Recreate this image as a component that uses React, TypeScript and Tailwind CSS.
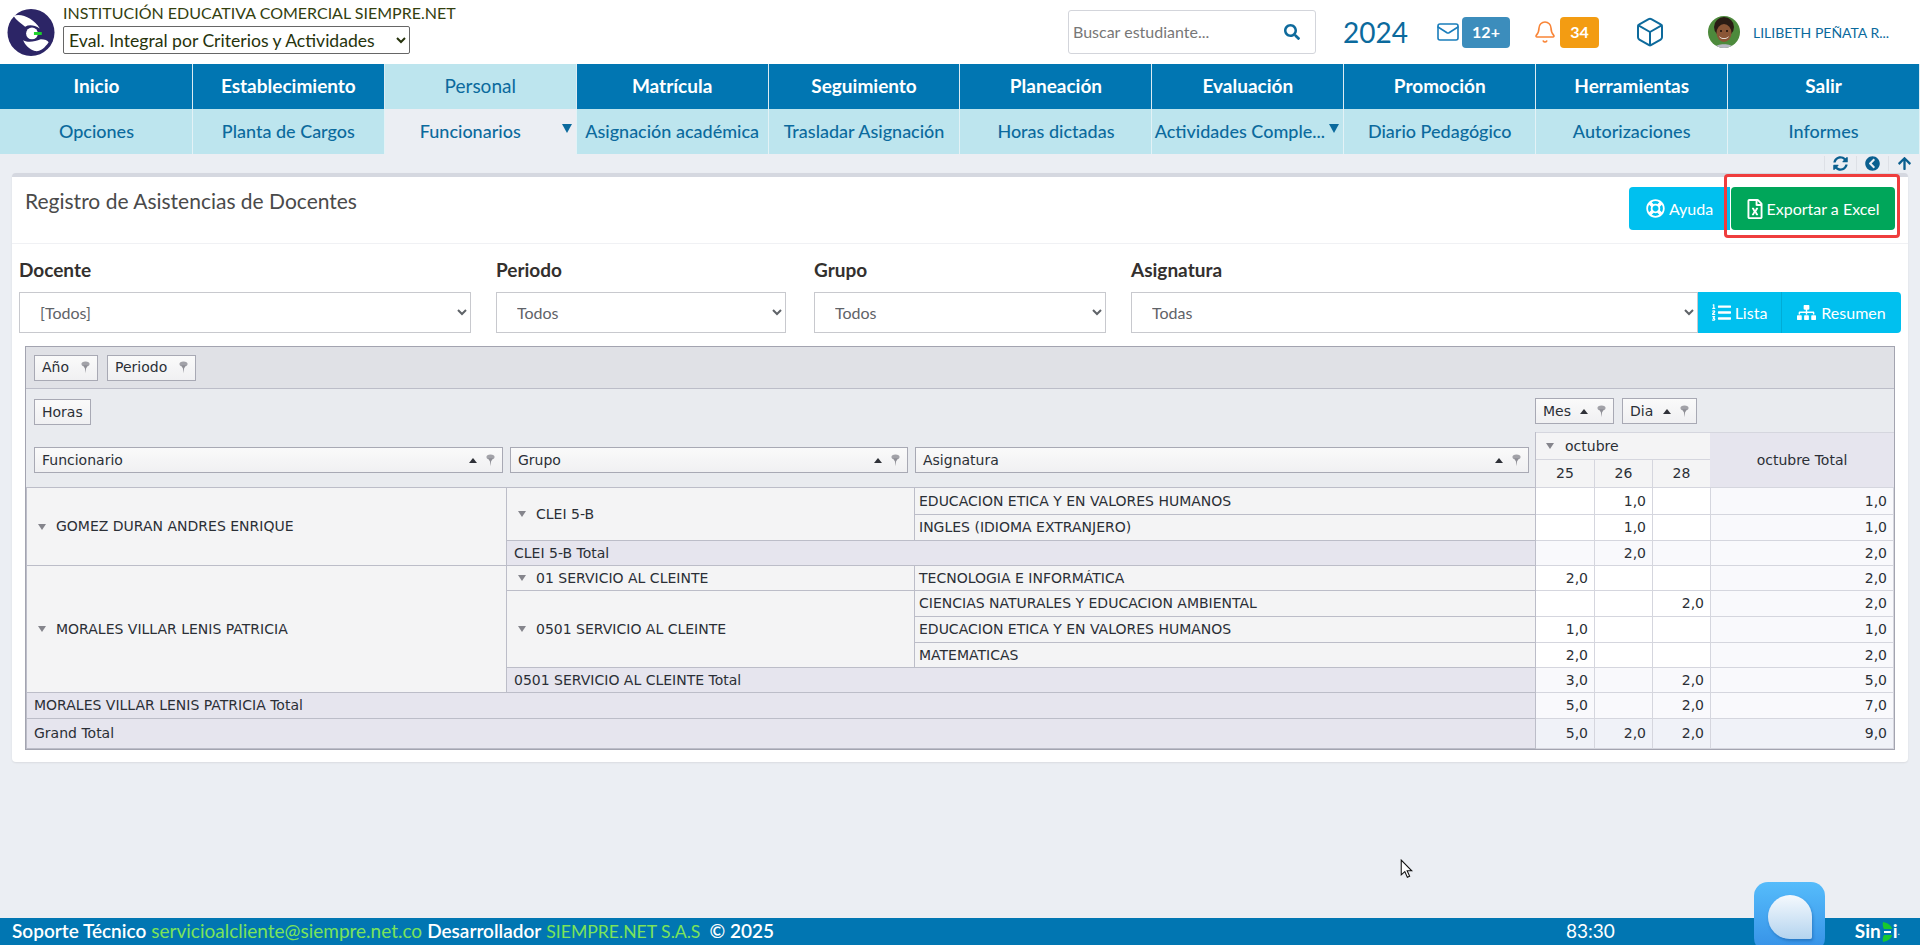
import { Bell, Box, Mail } from 'lucide-react';
import { FaArrowUp, FaChevronCircleLeft, FaListOl, FaRegFileExcel, FaRegLifeRing, FaSearch, FaSitemap, FaSyncAlt } from 'react-icons/fa';

const ui = "font-['Lato','Noto_Sans',sans-serif]";
const tbl = "font-['DejaVu_Sans','Liberation_Sans',sans-serif]";

const mainNav = ['Inicio', 'Establecimiento', 'Personal', 'Matrícula', 'Seguimiento', 'Planeación', 'Evaluación', 'Promoción', 'Herramientas', 'Salir'];
const subNav = ['Opciones', 'Planta de Cargos', 'Funcionarios', 'Asignación académica', 'Trasladar Asignación', 'Horas dictadas', 'Actividades Comple...', 'Diario Pedagógico', 'Autorizaciones', 'Informes'];

type Row = { h: string; vals: string[]; kind: 'plain' | 'total' | 'grand' };

function Logo() {
  return (
    <svg viewBox="0 0 48 48" className="h-[47px] w-[48px] shrink-0">
      <circle cx="24" cy="24" r="24" fill="#2c2566" />
      <path d="M6 7c9-3 21 3 27 13-6-4-11-4-15-2C14 15 9 12 6 7z" fill="#fff" />
      <path d="M16 32c6 3 12 1 18-1 4 0 7 1 8 3-4 6-9 10-14 9-6-2-10-6-12-11z" fill="#fff" />
      <circle cx="25" cy="25" r="6" fill="#fff" />
      <rect x="27" y="23.5" width="8" height="3" fill="#1ed12c" />
    </svg>
  );
}

function Avatar() {
  return (
    <svg viewBox="0 0 32 32" className="h-[32px] w-[32px] shrink-0 rounded-full">
      <rect width="32" height="32" fill="#4d8a3c" />
      <ellipse cx="16" cy="11" rx="10" ry="10" fill="#2a1c14" />
      <ellipse cx="16" cy="17" rx="7.5" ry="9" fill="#8a5636" />
      <path d="M11 20c3 3 7 3 10 0-1 4-9 4-10 0z" fill="#fff" />
      <circle cx="13" cy="15" r="1" fill="#1a100a" />
      <circle cx="19" cy="15" r="1" fill="#1a100a" />
      <path d="M6 32c2-5 18-5 20 0z" fill="#b8b8c4" />
    </svg>
  );
}

function Pin() {
  return (
    <svg viewBox="0 0 10 14" className="h-[13px] w-[9px] shrink-0">
      <ellipse cx="5" cy="3" rx="4.5" ry="2.8" fill="#a2a2a8" />
      <path d="M2.2 4.5h5.6L5.6 8 5 13.5 4.4 8z" fill="#8f8f96" />
    </svg>
  );
}

function Asc() {
  return <span className="block h-0 w-0 shrink-0 border-x-[4px] border-b-[5px] border-x-transparent border-b-[#2f3138]" />;
}

function Collapse() {
  return <span className="inline-block h-0 w-0 shrink-0 border-x-[4.5px] border-t-[6px] border-x-transparent border-t-[#85858c]" />;
}

function Chip({ label, sort, pin = true, className }: { label: string; sort?: boolean; pin?: boolean; className: string }) {
  return (
    <div className={`flex h-[26px] shrink-0 items-center border border-[#a8a9b4] bg-gradient-to-b from-[#fafafa] to-[#f0f0f2] pl-[7px] pr-[7px] text-[14px] text-[#2b2f36] ${className}`}>
      <span className="flex-1">{label}</span>
      {sort && <span className="mr-[9px] flex items-center"><Asc /></span>}
      {pin && <Pin />}
    </div>
  );
}

function Field({ label, value, className }: { label: string; value: string; className: string }) {
  return (
    <div className={`flex flex-col ${className}`}>
      <div className="mb-[8px] h-[28px] text-[19px] leading-[28px] font-bold text-[#33302e]">{label}</div>
      <select defaultValue={value} className="h-[41px] w-full border border-[#c8c9ce] bg-white pl-[16px] text-[16px] text-[#5f6368]">
        <option>{value}</option>
      </select>
    </div>
  );
}

const rows: Row[] = [
  { h: 'h-[27px]', vals: ['', '1,0', '', '1,0'], kind: 'plain' },
  { h: 'h-[26px]', vals: ['', '1,0', '', '1,0'], kind: 'plain' },
  { h: 'h-[25px]', vals: ['', '2,0', '', '2,0'], kind: 'total' },
  { h: 'h-[25px]', vals: ['2,0', '', '', '2,0'], kind: 'plain' },
  { h: 'h-[26px]', vals: ['', '', '2,0', '2,0'], kind: 'plain' },
  { h: 'h-[26px]', vals: ['1,0', '', '', '1,0'], kind: 'plain' },
  { h: 'h-[25px]', vals: ['2,0', '', '', '2,0'], kind: 'plain' },
  { h: 'h-[25px]', vals: ['3,0', '', '2,0', '5,0'], kind: 'total' },
  { h: 'h-[26px]', vals: ['5,0', '', '2,0', '7,0'], kind: 'total' },
  { h: 'h-[30px]', vals: ['5,0', '2,0', '2,0', '9,0'], kind: 'grand' },
];

const head = 'border border-[#bcbdc8] bg-[#f4f4f5] px-[4px] text-left font-normal';
const total = 'border border-[#bcbdc8] bg-[#e6e5ee] px-[7px] text-left font-normal';

function ValueCells({ row }: { row: Row }) {
  return (
    <>
      {row.vals.map((v, i) => {
        const bg = row.kind === 'grand' ? 'bg-[#f0f2f8]' : row.kind === 'total' || i === 3 ? 'bg-[#f9f9fc]' : 'bg-white';
        return <td key={i} className={`border border-[#d5d6de] px-[6px] text-right ${bg}`}>{v}</td>;
      })}
    </>
  );
}

function Pivot() {
  return (
    <div className={`mx-[13px] mt-[13px] border border-[#a3a4b0] text-[14px] text-[#2b2f36] ${tbl}`}>
      <div className="flex h-[42px] items-center gap-[9px] border-b border-[#bcbdc8] bg-[#e0e1e6] pl-[8px]">
        <Chip label="Año" className="w-[64px]" />
        <Chip label="Periodo" className="w-[89px]" />
      </div>
      <div className="flex h-[98px] bg-[#e9ebef]">
        <div className="flex w-[1509px] shrink-0 flex-col pl-[8px]">
          <Chip label="Horas" pin={false} className="mt-[10px] w-[57px]" />
          <div className="mt-[22px] flex gap-[7px]">
            <Chip label="Funcionario" sort className="w-[469px]" />
            <Chip label="Grupo" sort className="w-[398px]" />
            <Chip label="Asignatura" sort className="w-[614px]" />
          </div>
        </div>
        <div className="flex flex-1 flex-col">
          <div className="flex h-[43px] gap-[8px] pt-[9px]">
            <Chip label="Mes" sort className="w-[79px]" />
            <Chip label="Dia" sort className="w-[75px]" />
          </div>
          <div className="flex flex-1">
            <div className="flex w-[175px] flex-col border-l border-[#bcbdc8] bg-[#f4f4f5]">
              <div className="flex h-[28px] items-center gap-[11px] border-b border-t border-[#d5d6de] pl-[10px]"><Collapse />octubre</div>
              <div className="flex flex-1 text-center leading-[26px]">
                <div className="w-[59px] border-r border-[#d5d6de]">25</div>
                <div className="w-[58px] border-r border-[#d5d6de]">26</div>
                <div className="flex-1">28</div>
              </div>
            </div>
            <div className="flex flex-1 items-center justify-center border-t border-[#d5d6de] bg-[#e6e5ee]">octubre Total</div>
          </div>
        </div>
      </div>
      <table className="w-full table-fixed border-collapse">
        <colgroup>
          <col className="w-[480px]" />
          <col className="w-[408px]" />
          <col className="w-[621px]" />
          <col className="w-[59px]" />
          <col className="w-[58px]" />
          <col className="w-[58px]" />
          <col />
        </colgroup>
        <tbody>
          <tr className={rows[0].h}>
            <th rowSpan={3} className={`${head} !pl-[11px]`}><span className="flex items-center gap-[10px]"><Collapse />GOMEZ DURAN ANDRES ENRIQUE</span></th>
            <th rowSpan={2} className={`${head} !pl-[11px]`}><span className="flex items-center gap-[10px]"><Collapse />CLEI 5-B</span></th>
            <th className={head}>EDUCACION ETICA Y EN VALORES HUMANOS</th>
            <ValueCells row={rows[0]} />
          </tr>
          <tr className={rows[1].h}>
            <th className={head}>INGLES (IDIOMA EXTRANJERO)</th>
            <ValueCells row={rows[1]} />
          </tr>
          <tr className={rows[2].h}>
            <th colSpan={2} className={total}>CLEI 5-B Total</th>
            <ValueCells row={rows[2]} />
          </tr>
          <tr className={rows[3].h}>
            <th rowSpan={5} className={`${head} !pl-[11px]`}><span className="flex items-center gap-[10px]"><Collapse />MORALES VILLAR LENIS PATRICIA</span></th>
            <th className={`${head} !pl-[11px]`}><span className="flex items-center gap-[10px]"><Collapse />01 SERVICIO AL CLEINTE</span></th>
            <th className={head}>TECNOLOGIA E INFORMÁTICA</th>
            <ValueCells row={rows[3]} />
          </tr>
          <tr className={rows[4].h}>
            <th rowSpan={3} className={`${head} !pl-[11px]`}><span className="flex items-center gap-[10px]"><Collapse />0501 SERVICIO AL CLEINTE</span></th>
            <th className={head}>CIENCIAS NATURALES Y EDUCACION AMBIENTAL</th>
            <ValueCells row={rows[4]} />
          </tr>
          <tr className={rows[5].h}>
            <th className={head}>EDUCACION ETICA Y EN VALORES HUMANOS</th>
            <ValueCells row={rows[5]} />
          </tr>
          <tr className={rows[6].h}>
            <th className={head}>MATEMATICAS</th>
            <ValueCells row={rows[6]} />
          </tr>
          <tr className={rows[7].h}>
            <th colSpan={2} className={total}>0501 SERVICIO AL CLEINTE Total</th>
            <ValueCells row={rows[7]} />
          </tr>
          <tr className={rows[8].h}>
            <th colSpan={3} className={total}>MORALES VILLAR LENIS PATRICIA Total</th>
            <ValueCells row={rows[8]} />
          </tr>
          <tr className={rows[9].h}>
            <th colSpan={3} className={total}>Grand Total</th>
            <ValueCells row={rows[9]} />
          </tr>
        </tbody>
      </table>
    </div>
  );
}

export default function App() {
  return (
    <div className={`relative flex h-[945px] flex-col overflow-hidden bg-[#ebeef3] ${ui}`}>
      <header className="flex h-[64px] shrink-0 items-center bg-white pl-[7px]">
        <Logo />
        <div className="ml-[8px] flex w-[392px] shrink-0 flex-col self-start pt-[2px]">
          <div className="h-[24px] whitespace-nowrap text-[16px] leading-[22px] text-[#33400f]">INSTITUCIÓN EDUCATIVA COMERCIAL SIEMPRE.NET</div>
          <select defaultValue="e" className="h-[28px] w-[347px] rounded-[2px] border border-[#666] bg-white pl-[1px] text-[17.6px] text-[#26330c]">
            <option value="e">Eval. Integral por Criterios y Actividades</option>
          </select>
        </div>
        <div className="ml-[613px] flex h-[44px] w-[248px] shrink-0 items-center justify-between rounded-[3px] border border-[#d3d5db] pl-[4px] pr-[15px]">
          <span className="text-[16px] text-[#777]">Buscar estudiante...</span>
          <FaSearch className="h-[16px] w-[16px] text-[#0d6a9c]" />
        </div>
        <div className="ml-[27px] w-[64px] shrink-0 text-[28px] text-[#0b6a9d]">2024</div>
        <Mail className="ml-[29px] h-[24px] w-[24px] shrink-0 text-[#1a7dbb]" strokeWidth={1.6} />
        <span className="ml-[2px] flex h-[31px] w-[48px] shrink-0 items-center justify-center rounded-[4px] bg-[#3c8dbc] text-[16px] font-bold text-white">12+</span>
        <Bell className="ml-[23px] h-[24px] w-[24px] shrink-0 text-[#f98537]" strokeWidth={1.6} />
        <span className="ml-[3px] flex h-[31px] w-[39px] shrink-0 items-center justify-center rounded-[4px] bg-[#f39c12] text-[16px] font-bold text-white">34</span>
        <Box className="ml-[35px] h-[32px] w-[32px] shrink-0 text-[#0d6a9c]" strokeWidth={1.5} />
        <span className="ml-[42px] shrink-0"><Avatar /></span>
        <span className="ml-[13px] whitespace-nowrap text-[14px] text-[#0b6a9d]">LILIBETH PEÑATA R...</span>
      </header>

      <nav className="grid h-[45px] shrink-0 grid-cols-10 bg-[#0176b2] pl-[1px] text-[19px] font-bold text-white">
        {mainNav.map((m) => (
          <div key={m} className={`flex items-center justify-center border-r border-[#dcebf2] ${m === 'Personal' ? 'bg-[#bde5ee] font-normal text-[#0b6a9d]' : ''}`}>{m}</div>
        ))}
      </nav>
      <nav className="grid h-[45px] shrink-0 grid-cols-10 bg-[#bde5ee] pl-[1px] text-[18px] font-medium text-[#0b6a9d]">
        {subNav.map((s) => {
          const menu = s === 'Funcionarios' || s.startsWith('Actividades');
          return (
            <div key={s} className={`relative flex items-center justify-center whitespace-nowrap border-r border-[#e3f2f6] ${s === 'Funcionarios' ? 'bg-[#ebeef3] pr-[20px]' : ''} ${s.startsWith('Actividades') ? 'pr-[16px]' : ''}`}>
              {s}
              {menu && <span className="absolute right-[4px] top-[15px] h-0 w-0 border-x-[5px] border-t-[9px] border-x-transparent border-t-[#0b6a9d]" />}
            </div>
          );
        })}
      </nav>

      <div className="flex h-[19px] shrink-0 items-center justify-end text-[#0a5f8f]">
        <span className="flex w-[32px] justify-center border-l border-[#dde0e6]"><FaSyncAlt className="h-[15px] w-[15px]" /></span>
        <span className="flex w-[32px] justify-center border-l border-[#dde0e6]"><FaChevronCircleLeft className="h-[15px] w-[15px]" /></span>
        <span className="flex w-[32px] justify-center border-l border-[#dde0e6]"><FaArrowUp className="h-[15px] w-[15px]" /></span>
      </div>

      <main className="mx-[12px] h-[589px] shrink-0 rounded-[4px] border-t-[4px] border-[#d5d8e0] bg-white shadow-[0_1px_2px_rgba(0,0,0,0.08)]">
        <div className="flex h-[67px] items-start justify-between border-b border-[#f0f1f4] pl-[13px] pr-[13px]">
          <h1 className="mt-[8px] text-[21px] text-[#4a4a4a]">Registro de Asistencias de Docentes</h1>
          <div className="relative mt-[10px] flex">
            <button className="flex h-[43px] w-[101px] items-center justify-center gap-[4px] rounded-l-[4px] bg-[#00c0ef] text-[16px] text-white"><FaRegLifeRing className="h-[19px] w-[19px]" />Ayuda</button>
            <button className="ml-[1px] flex h-[43px] w-[164px] items-center justify-center gap-[4px] rounded-[4px] bg-[#00a65a] text-[16px] text-white"><FaRegFileExcel className="h-[20px] w-[16px]" />Exportar a Excel</button>
            <span className="absolute -top-[13px] -right-[5px] h-[64px] w-[176px] rounded-[4px] border-[3px] border-[#ef3d3d]" />
          </div>
        </div>
        <div className="flex items-end pl-[7px] pt-[12px]">
          <Field label="Docente" value="[Todos]" className="w-[452px]" />
          <Field label="Periodo" value="Todos" className="ml-[25px] w-[290px]" />
          <Field label="Grupo" value="Todos" className="ml-[28px] w-[292px]" />
          <Field label="Asignatura" value="Todas" className="ml-[25px] w-[567px]" />
          <div className="flex h-[41px] w-[203px] rounded-r-[4px] bg-[#00c0ef] text-[16px] text-white">
            <span className="flex w-[84px] items-center justify-center gap-[4px] border-r border-[#00acd6]"><FaListOl className="h-[19px] w-[19px]" />Lista</span>
            <span className="flex flex-1 items-center justify-center gap-[5px]"><FaSitemap className="h-[17px] w-[19px]" />Resumen</span>
          </div>
        </div>
        <Pivot />
      </main>

      <div className="flex-1" />

      <footer className="flex h-[27px] shrink-0 items-center whitespace-nowrap bg-[#0176b2] pl-[12px] text-[19px] text-white">
        <span className="w-[781px] shrink-0">
          <span className="font-semibold">Soporte Técnico</span>
          <span className="ml-[5px] text-[#7be35a]">servicioalcliente@siempre.net.co</span>
          <span className="ml-[5px] font-semibold">Desarrollador</span>
          <span className="ml-[5px] text-[17.6px] text-[#7be35a]">SIEMPRE.NET S.A.S</span>
          <span className="ml-[9px] font-semibold">© 2025</span>
        </span>
        <span className="ml-[773px] shrink-0">83:30</span>
        <span className="ml-[240px] flex shrink-0 items-center text-[19px] font-bold">
          Sin
          <svg viewBox="0 0 12 22" className="h-[22px] w-[12px]">
            <path d="M2 1c5 1 9 4 9 7H3c0 0-2-3-1-7zM2 21c5-1 9-4 9-7H3c0 0-2 3-1 7z" fill="#18c92f" />
            <rect x="3" y="10" width="7" height="2" fill="#fff" />
          </svg>
          i
          <span className="text-[10px] font-normal text-[#cfe3ef]">.</span>
        </span>
      </footer>

      <div className="absolute left-[1754px] top-[882px] flex h-[70px] w-[71px] items-start justify-center rounded-[14px] bg-gradient-to-b from-[#56bcfb] to-[#3590e6] pt-[13px]">
        <span className="block h-[44px] w-[44px] rounded-t-[22px] rounded-bl-[22px] rounded-br-[2px] bg-gradient-to-b from-[#f5f9fd] to-[#b4d4ef] shadow-[1px_2px_3px_rgba(0,60,130,0.35)]" />
      </div>

      <svg viewBox="0 0 12 19" className="absolute left-[1400px] top-[859px] h-[20px] w-[13px]">
        <path d="M1 1v14l3.4-3 2.4 5.4 2.2-1-2.4-5.2H11z" fill="#fff" stroke="#111" strokeWidth="1" />
      </svg>
    </div>
  );
}
